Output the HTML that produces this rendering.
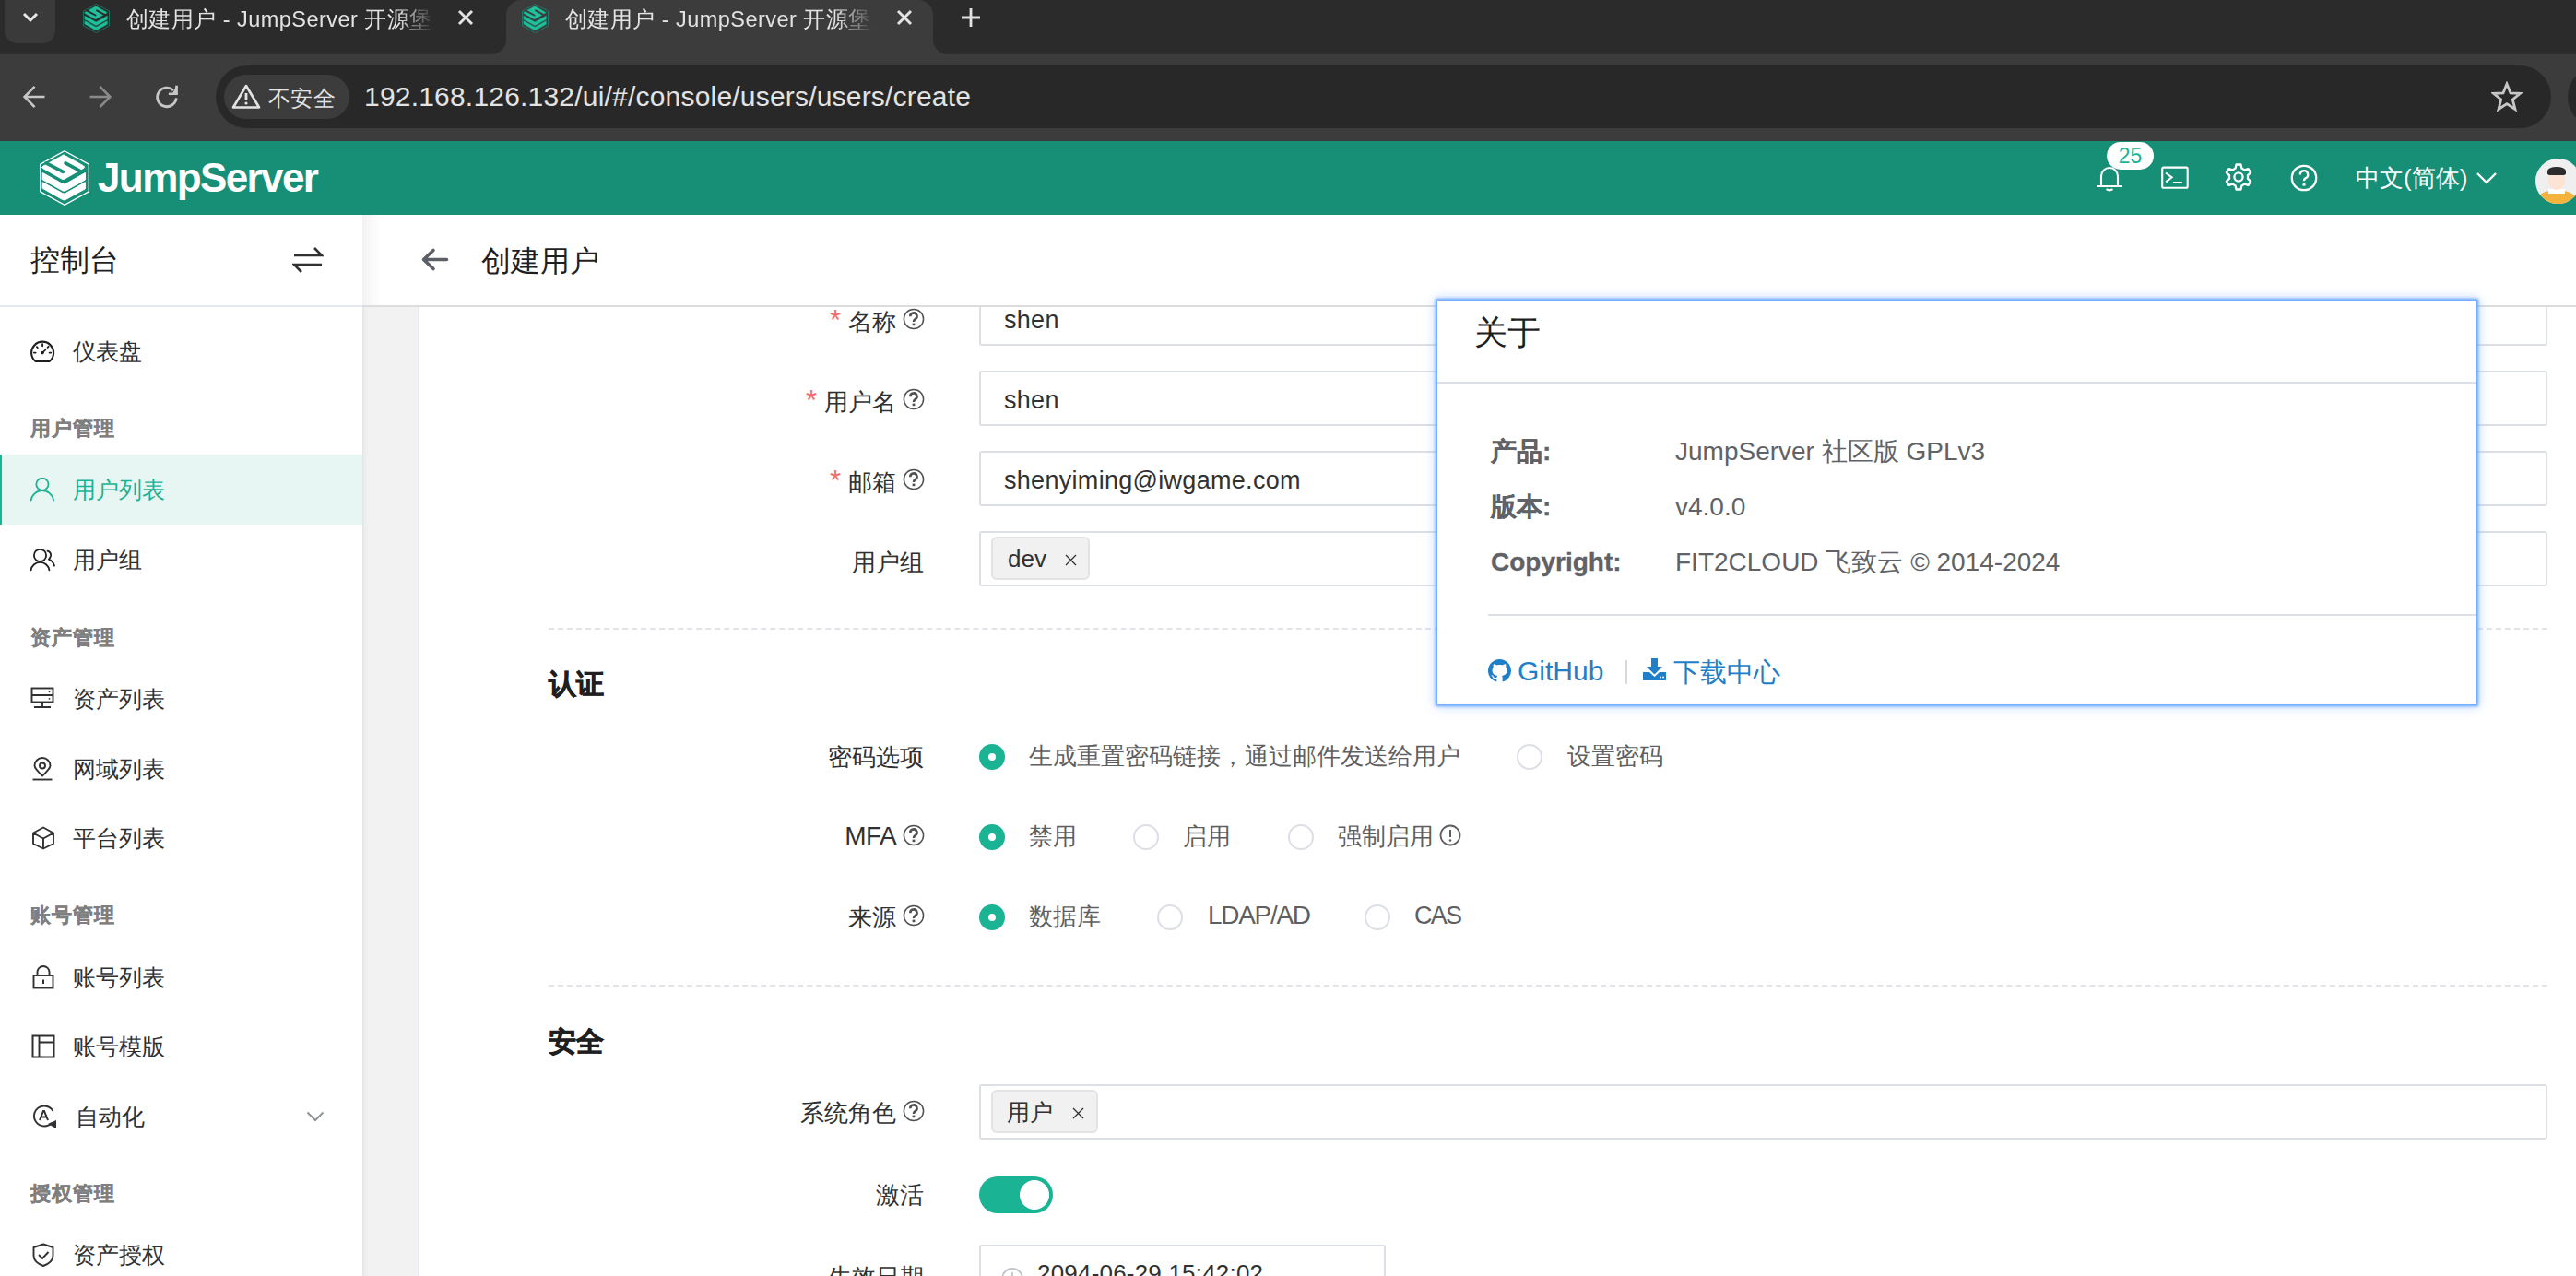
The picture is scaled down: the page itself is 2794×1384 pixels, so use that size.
<!DOCTYPE html>
<html><head><meta charset="utf-8">
<style>
*{box-sizing:border-box}
html,body{margin:0;padding:0;width:2794px;height:1384px;overflow:hidden;background:#fff;font-family:"Liberation Sans",sans-serif}
.a{position:absolute}
svg{display:block}
/* chrome */
#tabstrip{left:0;top:0;width:2794px;height:59px;background:#2b2b2b}
#toolbar{left:0;top:59px;width:2794px;height:94px;background:#3c3c3c}
#omni{left:234px;top:71px;width:2533px;height:68px;border-radius:34px;background:#282828}
#chip{left:243px;top:81px;width:136px;height:48px;border-radius:24px;background:#3c3c3c}
.ttl{color:#e3e3e3;font-size:23.5px;white-space:nowrap;overflow:hidden}
/* header */
#hdr{left:0;top:153px;width:2794px;height:80px;background:#178f77}
/* sidebar */
#side{left:0;top:233px;width:393px;height:1151px;background:#fff}
.si{position:absolute;left:0;width:393px;height:76px}
.si .ic{position:absolute;left:34px;top:25px;width:26px;height:26px}
.si .tx{position:absolute;left:79px;top:0;line-height:76px;font-size:25px;color:#303133}
.gt{position:absolute;left:33px;font-size:22px;font-weight:bold;color:#7f7f7f;line-height:30px;letter-spacing:1px;-webkit-text-stroke:0.3px #7f7f7f}
/* content */
#ph{left:393px;top:233px;width:2401px;height:100px;background:#fff;border-bottom:2px solid #dcdcdc}
#grey{left:393px;top:333px;width:62px;height:1051px;background:linear-gradient(90deg,#e4e4e4 0,#eeeeee 3px,#f2f2f2 8px)}
#card{left:453px;top:333px;width:2341px;height:1051px;background:#fff;border-left:2px solid #e9ecf5}
.lbl{position:absolute;right:1791px;font-size:26px;color:#303133;white-space:nowrap;text-align:right;line-height:58px}
.inp{position:absolute;left:1062px;width:1701px;height:60px;border:2px solid #dcdfe3;border-radius:3px;background:#fff}
.inp .v{position:absolute;left:25px;top:3px;line-height:54px;font-size:27px;letter-spacing:0.3px;color:#303133}
.lb{font-size:26px;line-height:36px;color:#303133;white-space:nowrap;text-align:right}
.dash{position:absolute;left:595px;width:2168px;height:0;border-top:2px dashed #e1e5e9}
.sec{position:absolute;left:595px;font-size:30px;font-weight:bold;color:#1f1f1f;-webkit-text-stroke:0.7px #1f1f1f}
.radio{position:absolute;width:28px;height:28px;border-radius:50%;border:2px solid #dcdfe6;background:#fff}
.radio.on{border:none;background:#1ab394}
.radio.on::after{content:"";position:absolute;left:10px;top:10px;width:8px;height:8px;border-radius:50%;background:#fff}
.rt{position:absolute;font-size:26px;color:#5f5f5f;line-height:40px;white-space:nowrap}
.q{display:inline-block;vertical-align:middle}
.tag{position:absolute;height:47px;border-radius:6px;background:#f1f1f1;border:2px solid #e3e3e3}
/* modal */
#modal{left:1559px;top:326px;width:1127px;height:438px;background:#fff;box-shadow:0 0 3px 2px rgba(100,163,255,1),0 0 12px 2px rgba(110,170,255,0.45)}
.ml{position:absolute;left:1617px;font-size:28px;font-weight:bold;color:#606266;-webkit-text-stroke:0.3px #606266}
.mv{position:absolute;left:1817px;font-size:28px;color:#606266;white-space:nowrap}
.link{color:#1f7fc8}
</style></head>
<body>
<svg width="0" height="0" style="position:absolute"><defs>
<g id="logo">
<path d="M27 0.7L53.3 15.2V44.8L27 59.3L0.7 44.8V15.2Z" fill="none" stroke-width="1.3" style="stroke:inherit"/>
<path d="M26.1 4.9L47.5 16.9Q49.5 18 47.6 19.4L26.6 31.3Q25.5 31.9 24.4 31.3L3.6 19.6Q1.8 18.5 3.6 17.4Z"/>
<path d="M7 13.8L25.3 23.4M28 13.8L50.5 26" fill="none" stroke-width="3.6" stroke-linecap="round" style="stroke:var(--cut)"/>
<path d="M3.2 24.5L24.6 36.3Q26.5 37.3 28.4 36.3L49.4 24.5V32L28.4 43.7Q26.5 44.7 24.6 43.7L3.2 31.8Z"/>
<path d="M3.2 34.7L24.6 46.5Q26.5 47.5 28.4 46.5L49.4 34.7V41.8L28.4 53.4Q26.5 54.4 24.6 53.4L3.2 41.2Z"/>
</g></defs></svg>
<!-- ============ BROWSER CHROME ============ -->
<div id="tabstrip" class="a"></div>
<div class="a" style="left:5px;top:-12px;width:55px;height:59px;border-radius:14px;background:#3a3a3a"></div>
<svg class="a" style="left:22px;top:11px" width="22" height="16" viewBox="0 0 22 16"><path d="M4 4 L11 11 L18 4" fill="none" stroke="#e8e8e8" stroke-width="3"/></svg>

<!-- active tab -->
<div class="a" style="left:549px;top:0;width:463px;height:59px;background:#3c3c3c;border-radius:16px 16px 0 0"></div>
<div class="a" style="left:533px;top:43px;width:16px;height:16px;background:#3c3c3c"></div>
<div class="a" style="left:517px;top:27px;width:32px;height:32px;background:#2b2b2b;border-radius:50%"></div>
<div class="a" style="left:1012px;top:43px;width:16px;height:16px;background:#3c3c3c"></div>
<div class="a" style="left:1012px;top:27px;width:32px;height:32px;background:#2b2b2b;border-radius:50%"></div>


<!-- tab 1 -->
<svg class="a" style="left:90px;top:4px" width="29" height="32" viewBox="0 0 54 60"><use href="#logo" fill="#1fc19c" stroke="#178f77" style="--cut:#2b2b2b"/></svg>
<div class="a ttl" style="left:137px;top:5px;width:335px;line-height:32px;letter-spacing:0.45px;-webkit-mask-image:linear-gradient(90deg,#000 88%,transparent)">创建用户 - JumpServer 开源堡垒机</div>
<svg class="a" style="left:496px;top:10px" width="18" height="18" viewBox="0 0 18 18"><path d="M2 2L16 16M16 2L2 16" stroke="#e3e3e3" stroke-width="2.9"/></svg>
<!-- tab 2 -->
<svg class="a" style="left:566px;top:4px" width="29" height="32" viewBox="0 0 54 60"><use href="#logo" fill="#1fc19c" stroke="#178f77" style="--cut:#3c3c3c"/></svg>
<div class="a ttl" style="left:613px;top:5px;width:335px;line-height:32px;letter-spacing:0.45px;-webkit-mask-image:linear-gradient(90deg,#000 88%,transparent)">创建用户 - JumpServer 开源堡垒机</div>
<svg class="a" style="left:972px;top:10px" width="18" height="18" viewBox="0 0 18 18"><path d="M2 2L16 16M16 2L2 16" stroke="#e3e3e3" stroke-width="2.9"/></svg>
<svg class="a" style="left:1042px;top:8px" width="22" height="22" viewBox="0 0 22 22"><path d="M11 1V21M1 11H21" stroke="#e3e3e3" stroke-width="2.8"/></svg>
<div id="toolbar" class="a"></div>
<div id="omni" class="a"></div>
<div id="chip" class="a"></div>

<!-- toolbar icons -->
<svg class="a" style="left:24px;top:92px" width="26" height="26" viewBox="0 0 26 26"><path d="M24.5 13H3M13.6 1.8L2.6 13L13.6 24.2" fill="none" stroke="#c7c7c7" stroke-width="2.6"/></svg>
<svg class="a" style="left:96px;top:92px" width="26" height="26" viewBox="0 0 26 26"><path d="M1.5 13H23M12.4 1.8L23.4 13L12.4 24.2" fill="none" stroke="#8a8a8a" stroke-width="2.6"/></svg>
<svg class="a" style="left:167px;top:92px" width="28" height="27" viewBox="0 0 28 27"><path d="M24.2 14.4A10.3 10.3 0 1 1 21 5.9" fill="none" stroke="#c7c7c7" stroke-width="2.8"/><path d="M15.9 11H25.9V0.8H23.1V3.3L20.5 8.4H15.9Z" fill="#c7c7c7"/></svg>
<svg class="a" style="left:251px;top:91px" width="32" height="27" viewBox="0 0 32 27"><path d="M16 2L30 25.5H2Z" fill="none" stroke="#e3e3e3" stroke-width="2.6" stroke-linejoin="round"/><path d="M16 10V17.5" stroke="#e3e3e3" stroke-width="2.8"/><circle cx="16" cy="21" r="1.6" fill="#e3e3e3"/></svg>
<div class="a" style="left:291px;top:88px;font-size:24px;line-height:38px;color:#e3e3e3;white-space:nowrap;letter-spacing:0.3px">不安全</div>
<div class="a" id="url" style="left:395px;top:84px;font-size:30px;line-height:42px;color:#e3e3e3;white-space:nowrap;letter-spacing:0.2px">192.168.126.132/ui/#/console/users/users/create</div>
<svg class="a" style="left:2702px;top:88px" width="34" height="33" viewBox="0 0 34 33"><path d="M17 3L21 12.8L31.5 13.3L23.3 20L26 30.5L17 24.6L8 30.5L10.7 20L2.5 13.3L13 12.8Z" fill="none" stroke="#c7c7c7" stroke-width="2.8" stroke-linejoin="miter"/></svg>
<div class="a" style="left:2785px;top:71px;width:68px;height:68px;border-radius:50%;background:#282828"></div>

<!-- ============ APP HEADER ============ -->
<div id="hdr" class="a"></div>

<svg class="a" style="left:43px;top:163px" width="54" height="60" viewBox="0 0 54 60"><use href="#logo" fill="#fff" stroke="#fff" style="--cut:#178f77"/></svg>
<div class="a" id="brand" style="left:106px;top:167px;font-size:44px;line-height:52px;font-weight:bold;color:#fff;white-space:nowrap;letter-spacing:-1.6px">JumpServer</div>
<!-- bell -->
<svg class="a" style="left:2272px;top:180px" width="32" height="28" viewBox="0 0 32 28"><path d="M7 22V11A9 9 0 0 1 25 11V22M2 22H30M12.5 25.2Q16 27.5 19.5 25.2" fill="none" stroke="#fff" stroke-width="2.1"/></svg>
<div class="a" style="left:2285px;top:154px;width:51px;height:30px;border-radius:15px;background:#fff;color:#1ab394;font-size:23px;line-height:30px;text-align:center">25</div>
<!-- terminal -->
<svg class="a" style="left:2343px;top:179px" width="31" height="27" viewBox="0 0 31 27"><rect x="2.2" y="2.6" width="27.5" height="22.2" rx="1.5" fill="none" stroke="#fff" stroke-width="2.1"/><path d="M6 8.5L12.6 13.3L6.2 18.4M13.9 19H23.8" fill="none" stroke="#fff" stroke-width="2.1"/></svg>
<!-- gear -->
<svg class="a" style="left:2412px;top:176px" width="32" height="32" viewBox="0 0 32 32"><path d="M13.5 2.5H18.5L19.4 6.6L22.6 8.4L26.6 7.1L29.1 11.4L26 14.2V17.8L29.1 20.6L26.6 24.9L22.6 23.6L19.4 25.4L18.5 29.5H13.5L12.6 25.4L9.4 23.6L5.4 24.9L2.9 20.6L6 17.8V14.2L2.9 11.4L5.4 7.1L9.4 8.4L12.6 6.6Z" fill="none" stroke="#fff" stroke-width="2.3" stroke-linejoin="round"/><circle cx="16" cy="16" r="4.6" fill="none" stroke="#fff" stroke-width="2.3"/></svg>
<!-- help -->
<svg class="a" style="left:2484px;top:178px" width="30" height="30" viewBox="0 0 30 30"><circle cx="15" cy="15" r="13.2" fill="none" stroke="#fff" stroke-width="2.3"/><path d="M10.8 11.5A4.2 4.2 0 1 1 16.5 15.3Q15 16 15 18.2" fill="none" stroke="#fff" stroke-width="2.4"/><circle cx="15" cy="22.2" r="1.6" fill="#fff"/></svg>
<div class="a" style="left:2555px;top:175px;font-size:26px;line-height:36px;color:#fff;white-space:nowrap">中文(简体)</div>
<svg class="a" style="left:2685px;top:186px" width="24" height="15" viewBox="0 0 24 15"><path d="M2 2L12 12L22 2" fill="none" stroke="#fff" stroke-width="2.3"/></svg>
<!-- avatar -->
<div class="a" style="left:2750px;top:172px;width:49px;height:49px;border-radius:50%;background:#efefef;overflow:hidden">
 <div class="a" style="left:1px;top:34px;width:44px;height:24px;border-radius:50% 50% 0 0;background:#f3b33d"></div>
 <div class="a" style="left:14px;top:33px;width:18px;height:5px;background:#fff"></div>
 <div class="a" style="left:14px;top:12px;width:18px;height:22px;border-radius:45%;background:#fde3d3"></div>
 <div class="a" style="left:13px;top:9px;width:20px;height:9px;border-radius:50% 50% 20% 20%;background:#2c2c2c"></div>
</div>

<!-- ============ SIDEBAR ============ -->
<div id="side" class="a"></div>

<div class="a" style="left:33px;top:262px;font-size:32px;line-height:40px;color:#1f1f1f;white-space:nowrap">控制台</div>
<svg class="a" style="left:317px;top:267px" width="34" height="30" viewBox="0 0 34 30"><path d="M2 10H32L24 2M32 20H2L10 28" fill="none" stroke="#303133" stroke-width="2.6" stroke-linejoin="miter"/></svg>
<div class="a" style="left:0;top:331px;width:393px;height:2px;background:#e4e9ef"></div>

<div class="si" style="top:343px"><svg class="ic" viewBox="0 0 28 28" style="left:33px;top:24px;width:28px;height:28px"><g transform="translate(1,1)"><path d="M4.6 24A12 12 0 1 1 19.6 24Z" fill="none" stroke="#1f1f1f" stroke-width="2.1" stroke-linejoin="round"/><path d="M2.9 14.6H4.6M19.6 14.6H21.3M12.1 5.3V7.2M5.9 8.2L6.8 9.1M17.6 8.8L18.6 7.8" stroke="#1f1f1f" stroke-width="1.9" stroke-linecap="round"/><path d="M12.1 14.6L15.8 11" stroke="#1f1f1f" stroke-width="1.6"/><circle cx="12.1" cy="14.6" r="1.8" fill="#1f1f1f"/></g></svg><div class="tx">仪表盘</div></div>

<div class="gt" style="top:450px">用户管理</div>
<div class="si" style="top:493px;background:#e8f6f3"><div class="a" style="left:0;top:0;width:2px;height:76px;background:#1ab394"></div><svg class="ic" viewBox="0 0 28 28" style="left:32px;top:25px;width:28px;height:28px"><circle cx="13.9" cy="7.2" r="6.6" fill="none" stroke="#1ab394" stroke-width="1.8"/><path d="M1.6 24.6A12.4 12.4 0 0 1 26.1 24.6" fill="none" stroke="#1ab394" stroke-width="1.8" stroke-linecap="round"/></svg><div class="tx" style="color:#1ab394">用户列表</div></div>
<div class="si" style="top:569px"><svg class="ic" viewBox="0 0 28 28" style="left:32px;top:25px;width:28px;height:28px"><circle cx="11.5" cy="8.4" r="6.6" fill="none" stroke="#1f1f1f" stroke-width="1.8"/><path d="M1.6 24.4A10 10 0 0 1 21.4 24.4" fill="none" stroke="#1f1f1f" stroke-width="1.8" stroke-linecap="round"/><path d="M19.5 3.7Q23.3 5 23.1 8.4Q22.8 11 20.9 12.6Q25.6 14.5 27 19.7" fill="none" stroke="#1f1f1f" stroke-width="1.8" stroke-linecap="round" stroke-linejoin="round"/></svg><div class="tx">用户组</div></div>

<div class="gt" style="top:677px">资产管理</div>
<div class="si" style="top:720px"><svg class="ic" viewBox="0 0 26 26" style="left:33px;top:24px"><rect x="1.5" y="2.5" width="23" height="15" fill="none" stroke="#303133" stroke-width="1.9"/><path d="M1.5 10H24.5M13 17.5V23M4 23H22" stroke="#303133" stroke-width="1.9"/><circle cx="20.5" cy="6.3" r="0.9" fill="#303133"/><circle cx="20.5" cy="13.8" r="0.9" fill="#303133"/></svg><div class="tx">资产列表</div></div>
<div class="si" style="top:796px"><svg class="ic" viewBox="0 0 26 26" style="left:33px"><path d="M13 20.5Q4.5 12.5 4.5 9.5A8.5 8.5 0 0 1 21.5 9.5Q21.5 12.5 13 20.5Z" fill="none" stroke="#303133" stroke-width="1.9" stroke-linejoin="round"/><circle cx="13" cy="9.5" r="3" fill="none" stroke="#303133" stroke-width="1.9"/><path d="M2.5 24.5H23.5" stroke="#303133" stroke-width="1.9"/></svg><div class="tx">网域列表</div></div>
<div class="si" style="top:871px"><svg class="ic" viewBox="0 0 26 26"><path d="M13 1.5L24 7.5V19L13 24.5L2 19V7.5Z M2 7.5L13 13.5L24 7.5M13 13.5V24.5" fill="none" stroke="#303133" stroke-width="1.9" stroke-linejoin="round"/></svg><div class="tx">平台列表</div></div>

<div class="gt" style="top:978px">账号管理</div>
<div class="si" style="top:1022px"><svg class="ic" viewBox="0 0 26 26"><path d="M6.5 11V7.5A6.5 6.5 0 0 1 19.5 7.5V11" fill="none" stroke="#303133" stroke-width="1.9"/><rect x="2.5" y="11" width="21" height="13.5" fill="none" stroke="#303133" stroke-width="1.9"/><path d="M13 15.5V20" stroke="#303133" stroke-width="2"/></svg><div class="tx">账号列表</div></div>
<div class="si" style="top:1097px"><svg class="ic" viewBox="0 0 26 26"><rect x="1.5" y="1.5" width="23" height="23" fill="none" stroke="#303133" stroke-width="2"/><path d="M8.5 1.5V24.5M8.5 8.5H24.5" stroke="#303133" stroke-width="1.9"/></svg><div class="tx">账号模版</div></div>
<div class="si" style="top:1173px"><svg class="ic" viewBox="0 0 28 28" style="width:28px;height:28px;top:24px"><path d="M22 21A11 11 0 1 1 23.5 8" fill="none" stroke="#303133" stroke-width="1.9"/><path d="M9 18L13 8H14L18 18M10.5 14.5H16.5" fill="none" stroke="#303133" stroke-width="2"/><path d="M18 22L27 18V27Z" fill="#303133"/></svg><div class="tx" style="left:82px">自动化</div><svg class="a" style="left:332px;top:32px" width="20" height="12" viewBox="0 0 20 12"><path d="M1.5 1.5L10 10L18.5 1.5" fill="none" stroke="#909399" stroke-width="2"/></svg></div>

<div class="gt" style="top:1280px">授权管理</div>
<div class="si" style="top:1323px"><svg class="ic" viewBox="0 0 26 26"><path d="M13 1.5L23.5 5V14Q23.5 21 13 25Q2.5 21 2.5 14V5Z" fill="none" stroke="#303133" stroke-width="1.9" stroke-linejoin="round"/><path d="M8 13L12 17L18.5 10" fill="none" stroke="#303133" stroke-width="1.9"/></svg><div class="tx">资产授权</div></div>

<!-- ============ CONTENT ============ -->
<div id="ph" class="a"></div>

<div class="a" style="left:393px;top:233px;width:20px;height:100px;background:linear-gradient(90deg,rgba(0,0,0,0.05),rgba(0,0,0,0))"></div>
<svg class="a" style="left:456px;top:268px" width="31" height="27" viewBox="0 0 31 27"><path d="M28.5 13.5H4M14 3.5L3.5 13.5L14 23.5" fill="none" stroke="#5c5f66" stroke-width="3.6" stroke-linecap="round" stroke-linejoin="round"/></svg>
<div class="a" style="left:522px;top:263px;font-size:32px;line-height:40px;color:#1f1f1f;white-space:nowrap">创建用户</div>
<div id="grey" class="a"></div>
<div id="card" class="a"></div>

<!-- basic fields -->
<div class="inp" style="top:331px;height:44px;border-top:none;border-radius:0 0 3px 3px"><div class="v" style="top:-11px">shen</div></div>
<div class="inp" style="top:402px"><div class="v">shen</div></div>
<div class="inp" style="top:489px"><div class="v">shenyiming@iwgame.com</div></div>
<div class="inp" style="top:576px"><div class="tag" style="left:11px;top:4px;width:107px"><span class="a" style="left:16px;top:0;line-height:44px;font-size:26px;color:#303133">dev</span><svg class="a" style="left:78px;top:17px" width="13" height="13" viewBox="0 0 13 13"><path d="M1 1L12 12M12 1L1 12" stroke="#303133" stroke-width="1.3"/></svg></div></div>
<div class="a" style="left:393px;top:331px;width:2401px;height:2px;background:#dcdcdc"></div>

<div class="a lb" style="right:1822px;top:331px"><span style="color:#f56c6c;margin-right:8px;position:relative;top:0px;font-size:31px;line-height:0">*</span>名称</div>
<svg class="a" style="left:979px;top:334px" width="24" height="24" viewBox="0 0 24 24"><circle cx="12" cy="12" r="10.6" fill="none" stroke="#505050" stroke-width="1.5"/><path d="M8.3 9.2A3.6 3.6 0 1 1 13.4 12.3Q12 13.1 12 15" fill="none" stroke="#505050" stroke-width="2.6"/><rect x="10.6" y="16.6" width="2.8" height="2.6" fill="#505050"/></svg>
<div class="a lb" style="right:1822px;top:418px"><span style="color:#f56c6c;margin-right:8px;position:relative;top:0px;font-size:31px;line-height:0">*</span>用户名</div>
<svg class="a" style="left:979px;top:421px" width="24" height="24" viewBox="0 0 24 24"><circle cx="12" cy="12" r="10.6" fill="none" stroke="#505050" stroke-width="1.5"/><path d="M8.3 9.2A3.6 3.6 0 1 1 13.4 12.3Q12 13.1 12 15" fill="none" stroke="#505050" stroke-width="2.6"/><rect x="10.6" y="16.6" width="2.8" height="2.6" fill="#505050"/></svg>
<div class="a lb" style="right:1822px;top:505px"><span style="color:#f56c6c;margin-right:8px;position:relative;top:0px;font-size:31px;line-height:0">*</span>邮箱</div>
<svg class="a" style="left:979px;top:508px" width="24" height="24" viewBox="0 0 24 24"><circle cx="12" cy="12" r="10.6" fill="none" stroke="#505050" stroke-width="1.5"/><path d="M8.3 9.2A3.6 3.6 0 1 1 13.4 12.3Q12 13.1 12 15" fill="none" stroke="#505050" stroke-width="2.6"/><rect x="10.6" y="16.6" width="2.8" height="2.6" fill="#505050"/></svg>
<div class="a lb" style="right:1792px;top:592px">用户组</div>
<div class="dash" style="top:681px"></div>

<div class="sec" style="top:722px;line-height:40px">认证</div>
<div class="a lb" style="right:1792px;top:803px">密码选项</div>
<div class="radio on" style="left:1062px;top:807px"></div><div class="rt" style="left:1116px;top:800px">生成重置密码链接，通过邮件发送给用户</div>
<div class="radio" style="left:1645px;top:807px"></div><div class="rt" style="left:1700px;top:800px">设置密码</div>

<div class="a lb" style="right:1822px;top:889px;font-size:28px;letter-spacing:-0.6px">MFA</div>
<svg class="a" style="left:979px;top:894px" width="24" height="24" viewBox="0 0 24 24"><circle cx="12" cy="12" r="10.6" fill="none" stroke="#505050" stroke-width="1.5"/><path d="M8.3 9.2A3.6 3.6 0 1 1 13.4 12.3Q12 13.1 12 15" fill="none" stroke="#505050" stroke-width="2.6"/><rect x="10.6" y="16.6" width="2.8" height="2.6" fill="#505050"/></svg>
<div class="radio on" style="left:1062px;top:894px"></div><div class="rt" style="left:1116px;top:887px">禁用</div>
<div class="radio" style="left:1229px;top:894px"></div><div class="rt" style="left:1283px;top:887px">启用</div>
<div class="radio" style="left:1397px;top:894px"></div><div class="rt" style="left:1451px;top:887px">强制启用</div>
<svg class="a" style="left:1561px;top:894px" width="24" height="24" viewBox="0 0 24 24"><circle cx="12" cy="12" r="10.5" fill="none" stroke="#5f5f5f" stroke-width="1.8"/><path d="M12 6V14" stroke="#5f5f5f" stroke-width="2"/><circle cx="12" cy="17.5" r="1.3" fill="#5f5f5f"/></svg>

<div class="a lb" style="right:1822px;top:977px">来源</div>
<svg class="a" style="left:979px;top:981px" width="24" height="24" viewBox="0 0 24 24"><circle cx="12" cy="12" r="10.6" fill="none" stroke="#505050" stroke-width="1.5"/><path d="M8.3 9.2A3.6 3.6 0 1 1 13.4 12.3Q12 13.1 12 15" fill="none" stroke="#505050" stroke-width="2.6"/><rect x="10.6" y="16.6" width="2.8" height="2.6" fill="#505050"/></svg>
<div class="radio on" style="left:1062px;top:981px"></div><div class="rt" style="left:1116px;top:974px">数据库</div>
<div class="radio" style="left:1255px;top:981px"></div><div class="rt" style="left:1310px;top:973px;font-size:28px;letter-spacing:-1.3px">LDAP/AD</div>
<div class="radio" style="left:1480px;top:981px"></div><div class="rt" style="left:1534px;top:973px;font-size:27px;letter-spacing:-1.8px">CAS</div>
<div class="dash" style="top:1068px"></div>

<div class="sec" style="top:1110px;line-height:40px">安全</div>
<div class="a lb" style="right:1822px;top:1189px">系统角色</div>
<svg class="a" style="left:979px;top:1193px" width="24" height="24" viewBox="0 0 24 24"><circle cx="12" cy="12" r="10.6" fill="none" stroke="#505050" stroke-width="1.5"/><path d="M8.3 9.2A3.6 3.6 0 1 1 13.4 12.3Q12 13.1 12 15" fill="none" stroke="#505050" stroke-width="2.6"/><rect x="10.6" y="16.6" width="2.8" height="2.6" fill="#505050"/></svg>
<div class="inp" style="top:1176px"><div class="tag" style="left:11px;top:4px;width:116px"><span class="a" style="left:15px;top:0;line-height:44px;font-size:25px;color:#303133">用户</span><svg class="a" style="left:86px;top:17px" width="13" height="13" viewBox="0 0 13 13"><path d="M1 1L12 12M12 1L1 12" stroke="#303133" stroke-width="1.3"/></svg></div></div>

<div class="a lb" style="right:1792px;top:1278px">激活</div>
<div class="a" style="left:1062px;top:1276px;width:80px;height:40px;border-radius:20px;background:#1ab394"><div class="a" style="left:44px;top:4px;width:32px;height:32px;border-radius:50%;background:#fff"></div></div>

<div class="a lb" style="right:1792px;top:1367px">生效日期</div>
<div class="a" style="left:1062px;top:1350px;width:441px;height:60px;border:2px solid #dcdfe3;border-radius:3px;background:#fff">
 <svg class="a" style="left:21px;top:22px" width="26" height="26" viewBox="0 0 26 26"><circle cx="13" cy="13" r="11" fill="none" stroke="#c0c4cc" stroke-width="1.8"/><path d="M13 6V13H18" fill="none" stroke="#c0c4cc" stroke-width="1.8"/></svg>
 <div class="a" style="left:61px;top:11px;font-size:26px;line-height:36px;color:#303133;white-space:nowrap;letter-spacing:0.2px">2094-06-29 15:42:02</div>
</div>

<!-- ============ MODAL ============ -->
<div id="modal" class="a"></div>

<div class="a" style="left:1599px;top:340px;font-size:36px;line-height:42px;color:#1f1f1f;white-space:nowrap">关于</div>
<div class="a" style="left:1559px;top:414px;width:1127px;height:2px;background:#dcdfe6"></div>
<div class="ml" style="top:472px;line-height:36px">产品:</div><div class="mv" style="top:472px;line-height:36px">JumpServer 社区版 GPLv3</div>
<div class="ml" style="top:532px;line-height:36px">版本:</div><div class="mv" style="top:532px;line-height:36px">v4.0.0</div>
<div class="ml" style="top:592px;line-height:36px">Copyright:</div><div class="mv" style="top:592px;line-height:36px">FIT2CLOUD 飞致云 © 2014-2024</div>
<div class="a" style="left:1614px;top:666px;width:1072px;height:2px;background:#dcdfe6"></div>
<svg class="a" style="left:1614px;top:715px" width="25" height="25" viewBox="0 0 16 16"><path fill="#1f7fc8" d="M8 0C3.58 0 0 3.58 0 8c0 3.54 2.29 6.53 5.47 7.59.4.07.55-.17.55-.38 0-.19-.01-.82-.01-1.49-2.01.37-2.53-.49-2.69-.94-.09-.23-.48-.94-.82-1.13-.28-.15-.68-.52-.01-.53.63-.01 1.08.58 1.23.82.72 1.21 1.87.87 2.33.66.07-.52.28-.87.51-1.07-1.78-.2-3.64-.89-3.64-3.95 0-.87.31-1.590.82-2.15-.08-.2-.36-1.02.08-2.12 0 0 .67-.21 2.2.82.64-.18 1.32-.27 2-.27.68 0 1.36.09 2 .27 1.53-1.04 2.2-.82 2.2-.82.44 1.1.16 1.92.08 2.12.51.56.82 1.27.82 2.15 0 3.07-1.87 3.75-3.65 3.95.29.25.54.73.54 1.48 0 1.07-.01 1.93-.01 2.2 0 .21.15.46.55.38A8.013 8.013 0 0016 8c0-4.42-3.58-8-8-8z"/></svg>
<div class="a link" style="left:1646px;top:709px;font-size:30px;line-height:38px;white-space:nowrap">GitHub</div>
<div class="a" style="left:1763px;top:716px;width:2px;height:26px;background:#d9d9d9"></div>
<svg class="a" style="left:1781px;top:713px" width="27" height="26" viewBox="0 0 27 26"><path d="M10 1H17V10H22L13.5 18.5L5 10H10Z" fill="#1f7fc8"/><path d="M1 16H8L13.5 21L19 16H26V25H1Z" fill="#1f7fc8"/><circle cx="20" cy="21.5" r="1" fill="#fff"/><circle cx="23" cy="21.5" r="1" fill="#fff"/></svg>
<div class="a link" style="left:1815px;top:710px;font-size:29px;line-height:38px;white-space:nowrap">下载中心</div>
</body></html>
